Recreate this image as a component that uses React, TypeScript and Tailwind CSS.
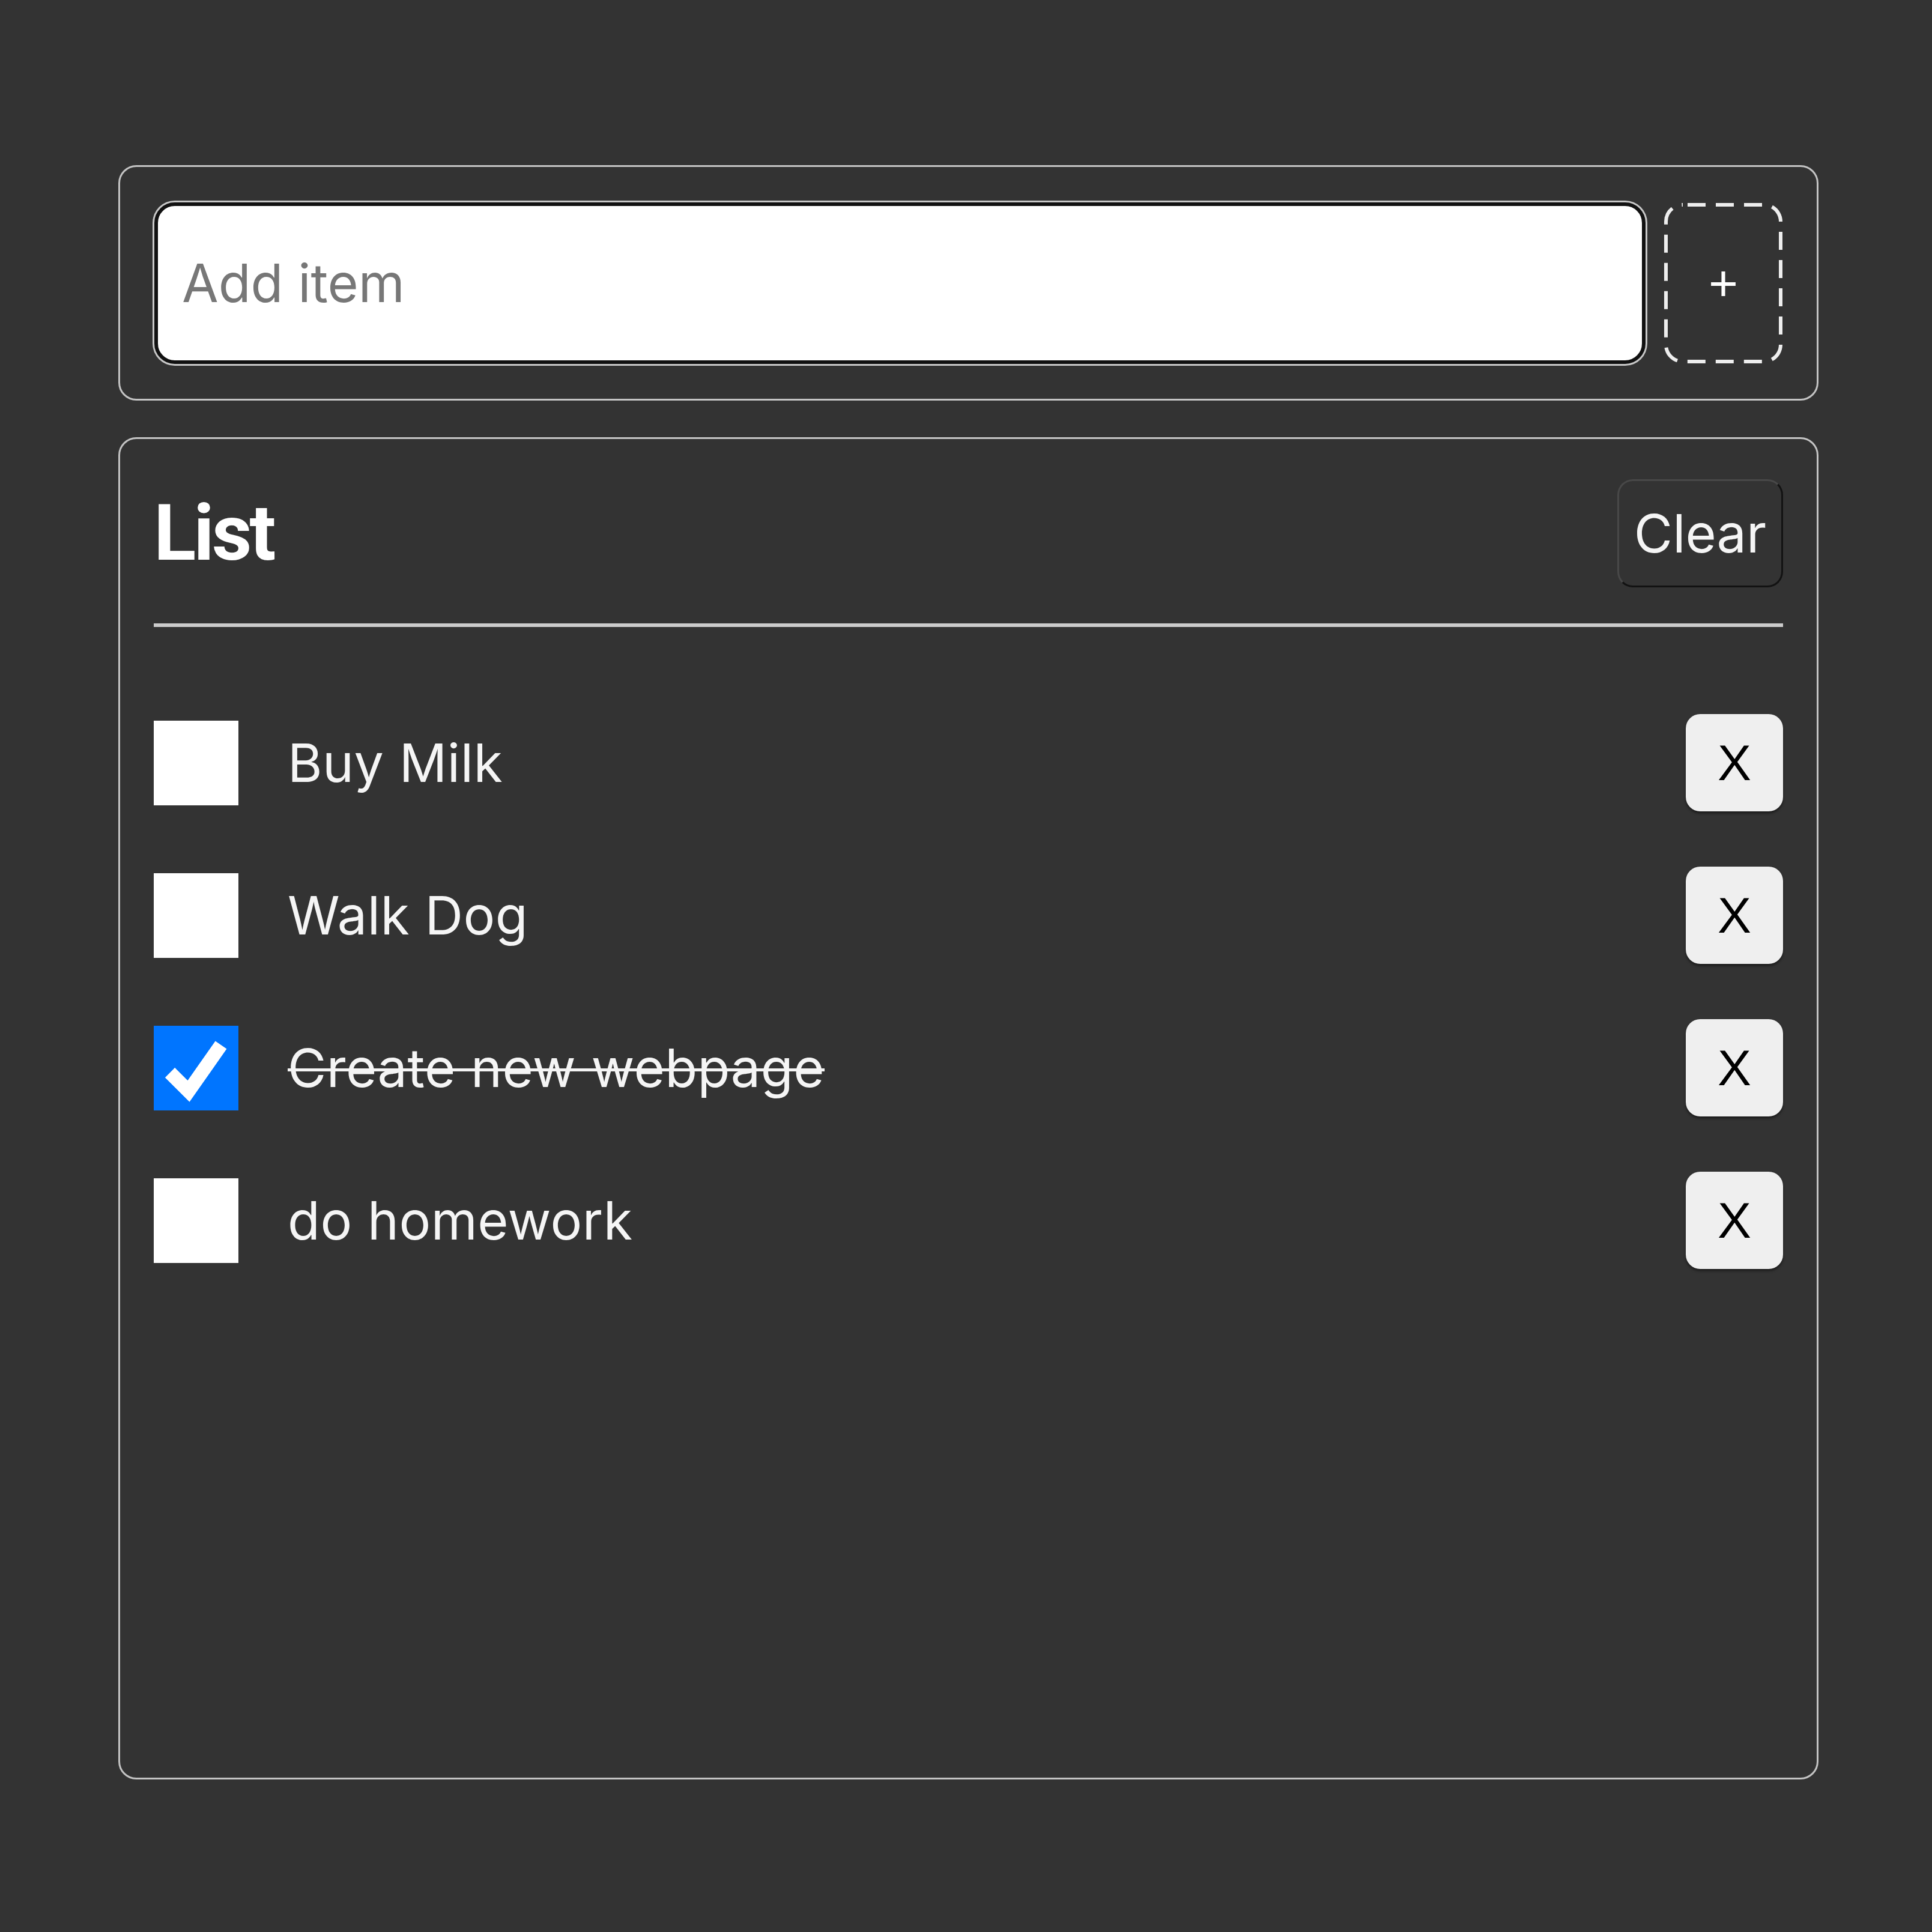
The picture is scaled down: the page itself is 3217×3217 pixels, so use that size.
import { useState } from 'react'

interface Item {
  id: number
  text: string
  done: boolean
}

const initialItems: Item[] = [
  { id: 1, text: 'Buy Milk', done: false },
  { id: 2, text: 'Walk Dog', done: false },
  { id: 3, text: 'Create new webpage', done: true },
  { id: 4, text: 'do homework', done: false },
]

function CheckBox({ checked, onToggle }: { checked: boolean; onToggle: () => void }) {
  return (
    <button
      onClick={onToggle}
      className={`w-[141px] h-[141px] shrink-0 ${checked ? 'bg-[#0075ff]' : 'bg-white'}`}
      aria-pressed={checked}
    >
      {checked && (
        <svg viewBox="0 0 141 141" className="w-full h-full">
          <polyline
            points="27,78 58,109 112,32"
            fill="none"
            stroke="white"
            strokeWidth="23"
            strokeLinejoin="miter"
          />
        </svg>
      )}
    </button>
  )
}

export default function App() {
  const [items, setItems] = useState<Item[]>(initialItems)
  const [draft, setDraft] = useState('')

  const add = () => {
    if (!draft.trim()) return
    setItems([...items, { id: Date.now(), text: draft.trim(), done: false }])
    setDraft('')
  }

  return (
    <div className="min-h-screen w-full bg-[#333333] pt-[275px] pb-[254px]">
      <div className="ml-[197px] w-[2831px] flex flex-col gap-[61px]">
        {/* add row */}
        <div className="h-[392px] border-[3px] border-[#c4c4c4] rounded-[30px] flex items-center px-[57px] gap-[31px]">
          <input
            value={draft}
            onChange={e => setDraft(e.target.value)}
            placeholder="Add item"
            className="flex-1 h-[269px] bg-white border-[6px] border-[#111111] rounded-[34px] shadow-[0_0_0_3px_#c8c8c8] px-[40px] text-[88px] text-black placeholder:text-[#777777] outline-none font-['Inter',sans-serif]"
          />
          <button
            onClick={add}
            className="relative w-[197px] h-[267px] shrink-0 flex items-center justify-center text-white text-[84px] leading-none font-['Liberation_Sans',Arial,sans-serif]"
          >
            <svg className="absolute inset-0 w-full h-full" viewBox="0 0 197 267">
              <rect
                x="3"
                y="3"
                width="191"
                height="261"
                rx="28"
                fill="none"
                stroke="#eeeeee"
                strokeWidth="6"
                strokeDasharray="30 17"
                strokeDashoffset="-8"
              />
            </svg>
            +
          </button>
        </div>

        {/* list */}
        <div className="h-[2235px] border-[3px] border-[#c4c4c4] rounded-[30px] px-[56px] pt-[67px]">
          <div className="h-[180px] flex items-center justify-between">
            <h1 className="text-[130px] font-bold text-white tracking-[-4px] leading-none font-['Roboto',Arial,sans-serif]">
              List
            </h1>
            <button
              onClick={() => setItems([])}
              className="w-[276px] h-[180px] rounded-[26px] border-[3px] border-t-[#484848] border-l-[#484848] border-r-[#121212] border-b-[#121212] bg-[#333333] text-[#f5f5f5] text-[88px] font-['Inter',sans-serif]"
            >
              Clear
            </button>
          </div>
          <div className="mt-[60px] h-[6px] bg-[#cccccc]" />
          <ul className="mt-[145px] flex flex-col gap-[92px]">
            {items.map(item => (
              <li key={item.id} className="h-[162px] flex items-center">
                <CheckBox
                  checked={item.done}
                  onToggle={() =>
                    setItems(items.map(i => (i.id === item.id ? { ...i, done: !i.done } : i)))
                  }
                />
                <span
                  className={`ml-[82px] flex-1 text-[88px] text-[#f5f5f5] tracking-[0.5px] font-['Inter',sans-serif] ${
                    item.done ? 'line-through [text-decoration-thickness:5px]' : ''
                  }`}
                >
                  {item.text}
                </span>
                <button
                  onClick={() => setItems(items.filter(i => i.id !== item.id))}
                  className="w-[162px] h-[162px] shrink-0 rounded-[24px] bg-[#efefef] shadow-[0_3px_4px_rgba(0,0,0,0.5)] text-black text-[84px] font-['Liberation_Sans',Arial,sans-serif]"
                >
                  X
                </button>
              </li>
            ))}
          </ul>
        </div>
      </div>
    </div>
  )
}
